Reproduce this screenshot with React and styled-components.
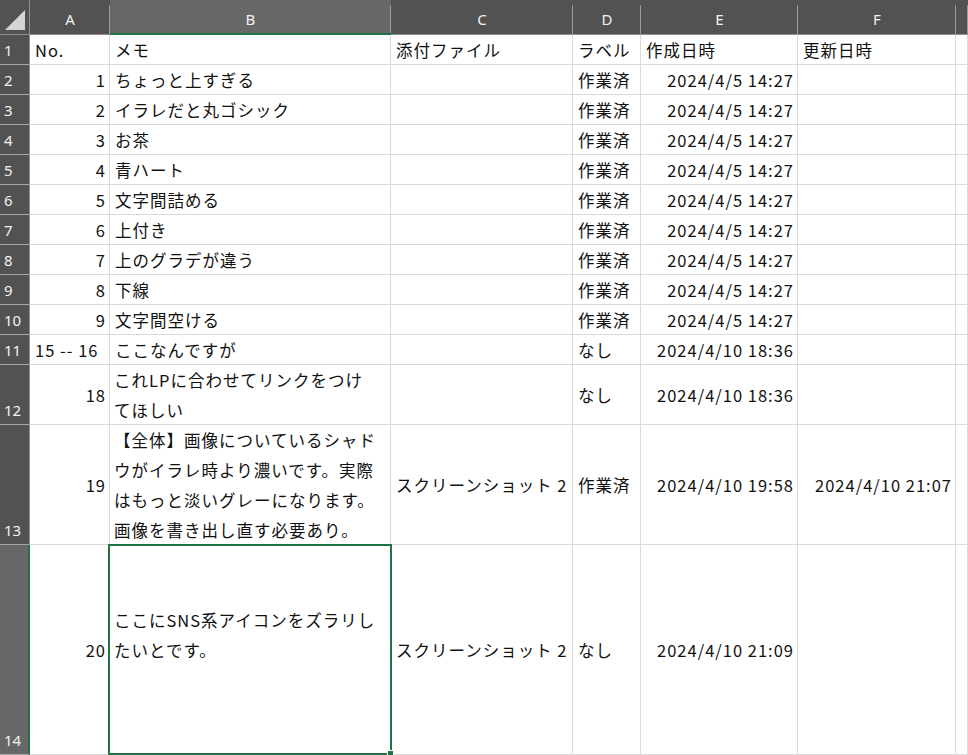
import React from "react";
import styled, { createGlobalStyle, css } from "styled-components";

const GlobalStyle = createGlobalStyle`
  html, body {
    margin: 0;
    padding: 0;
    background: #ffffff;
    overflow: hidden;
  }
  body {
    font-family: "Noto Sans CJK JP", "Noto Sans", sans-serif;
  }
`;

const columns = ["A", "B", "C", "D", "E", "F", ""];
const ACTIVE_COL = "B";
const ACTIVE_ROW = 14;

// r = right aligned value, l = left aligned value
const rows = [
  { h: 30, cells: [{ l: "No." }, { l: "メモ" }, { l: "添付ファイル" }, { l: "ラベル" }, { l: "作成日時" }, { l: "更新日時" }] },
  { h: 30, cells: [{ r: "1" }, { l: "ちょっと上すぎる" }, {}, { l: "作業済" }, { r: "2024/4/5 14:27" }, {}] },
  { h: 30, cells: [{ r: "2" }, { l: "イラレだと丸ゴシック" }, {}, { l: "作業済" }, { r: "2024/4/5 14:27" }, {}] },
  { h: 30, cells: [{ r: "3" }, { l: "お茶" }, {}, { l: "作業済" }, { r: "2024/4/5 14:27" }, {}] },
  { h: 30, cells: [{ r: "4" }, { l: "青ハート" }, {}, { l: "作業済" }, { r: "2024/4/5 14:27" }, {}] },
  { h: 30, cells: [{ r: "5" }, { l: "文字間詰める" }, {}, { l: "作業済" }, { r: "2024/4/5 14:27" }, {}] },
  { h: 30, cells: [{ r: "6" }, { l: "上付き" }, {}, { l: "作業済" }, { r: "2024/4/5 14:27" }, {}] },
  { h: 30, cells: [{ r: "7" }, { l: "上のグラデが違う" }, {}, { l: "作業済" }, { r: "2024/4/5 14:27" }, {}] },
  { h: 30, cells: [{ r: "8" }, { l: "下線" }, {}, { l: "作業済" }, { r: "2024/4/5 14:27" }, {}] },
  { h: 30, cells: [{ r: "9" }, { l: "文字間空ける" }, {}, { l: "作業済" }, { r: "2024/4/5 14:27" }, {}] },
  { h: 30, cells: [{ l: "15 -- 16" }, { l: "ここなんですが" }, {}, { l: "なし" }, { r: "2024/4/10 18:36" }, {}] },
  {
    h: 60,
    cells: [
      { r: "18" },
      { l: "これLPに合わせてリンクをつけ\nてほしい", wrap: true },
      {},
      { l: "なし" },
      { r: "2024/4/10 18:36" },
      {},
    ],
  },
  {
    h: 120,
    cells: [
      { r: "19" },
      {
        l: "【全体】画像についているシャド\nウがイラレ時より濃いです。実際\nはもっと淡いグレーになります。\n画像を書き出し直す必要あり。",
        wrap: true,
      },
      { l: "スクリーンショット 2" },
      { l: "作業済" },
      { r: "2024/4/10 19:58" },
      { r: "2024/4/10 21:07" },
    ],
  },
  {
    h: 210,
    cells: [
      { r: "20" },
      // trailing blank line keeps the text block sitting like the cell value does
      { l: "ここにSNS系アイコンをズラリし\nたいとです。\n ", wrap: true },
      { l: "スクリーンショット 2" },
      { l: "なし" },
      { r: "2024/4/10 21:09" },
      {},
    ],
  },
];

const Sheet = styled.div`
  display: grid;
  grid-template-columns: 30px 80px 281px 182px 68px 157px 158px 1fr;
  grid-template-rows: 35px ${rows.map((r) => `${r.h}px`).join(" ")};
  width: 968px;
  height: 755px;
  overflow: hidden;
  background: #ffffff;
`;

const Corner = styled.div`
  position: relative;
  background: #525252;
  border-right: 1px solid #8f8f8f;
  border-bottom: 1px solid #8f8f8f;
  svg {
    position: absolute;
    left: 4px;
    top: 9px;
  }
`;

const ColHead = styled.div`
  position: relative;
  display: flex;
  align-items: center;
  justify-content: center;
  padding-top: 4px;
  background: ${(p) => (p.$active ? "#676767" : "#525252")};
  color: #f2f2f2;
  font-family: "Noto Sans", "Noto Sans CJK JP", sans-serif;
  font-size: 15px;
  border-bottom: ${(p) => (p.$active ? "2px solid #217346" : "1px solid #8f8f8f")};
  &::after {
    content: "";
    position: absolute;
    right: 0;
    top: 5px;
    bottom: 0;
    width: 1px;
    background: #9a9a9a;
  }
`;

const RowHead = styled.div`
  display: flex;
  align-items: flex-end;
  padding: 0 0 2px 4px;
  background: ${(p) => (p.$active ? "#676767" : "#525252")};
  color: #f2f2f2;
  font-family: "Noto Sans", "Noto Sans CJK JP", sans-serif;
  font-size: 15px;
  line-height: 24px;
  border-bottom: 1px solid #a6a6a6;
  border-right: ${(p) => (p.$active ? "2px solid #217346" : "1px solid #8f8f8f")};
`;

const Cell = styled.div`
  position: relative;
  display: flex;
  align-items: center;
  justify-content: ${(p) => (p.$right ? "flex-end" : "flex-start")};
  min-width: 0;
  padding: 0 3px 0 5px;
  border-right: 1px solid #dadada;
  border-bottom: 1px solid #dadada;
  color: #111111;
  font-size: 16.5px;
  line-height: 30px;
  letter-spacing: 1px;
  white-space: ${(p) => (p.$wrap ? "pre" : "nowrap")};
  ${(p) =>
    p.$wrap &&
    css`
      padding-left: 4px;
      padding-right: 2px;
    `}
`;

const CellText = styled.span`
  display: block;
  min-width: 0;
  overflow: hidden;
`;

const Selection = styled.div`
  position: absolute;
  z-index: 2;
  left: -2px;
  top: -1px;
  right: -2px;
  bottom: -1px;
  border: 2px solid #217346;
  pointer-events: none;
  &::after {
    content: "";
    position: absolute;
    right: -4px;
    bottom: -4px;
    width: 5px;
    height: 5px;
    background: #217346;
    border: 1px solid #ffffff;
  }
`;

export default function App() {
  return (
    <>
      <GlobalStyle />
      <Sheet>
        <Corner>
          <svg width="22" height="22" viewBox="0 0 22 22">
            <polygon points="1,21 21,21 21,1" fill="#d4d4d4" />
          </svg>
        </Corner>
        {columns.map((c, i) => (
          <ColHead key={i} $active={c === ACTIVE_COL}>
            {c}
          </ColHead>
        ))}
        {rows.map((row, ri) => {
          const n = ri + 1;
          return (
            <React.Fragment key={n}>
              <RowHead $active={n === ACTIVE_ROW}>{n}</RowHead>
              {[...row.cells, {}].map((cell, ci) => {
                const isSel = n === ACTIVE_ROW && columns[ci] === ACTIVE_COL;
                return (
                  <Cell key={ci} $right={!!cell.r} $wrap={!!cell.wrap}>
                    <CellText>{cell.r || cell.l || ""}</CellText>
                    {isSel && <Selection />}
                  </Cell>
                );
              })}
            </React.Fragment>
          );
        })}
      </Sheet>
    </>
  );
}
